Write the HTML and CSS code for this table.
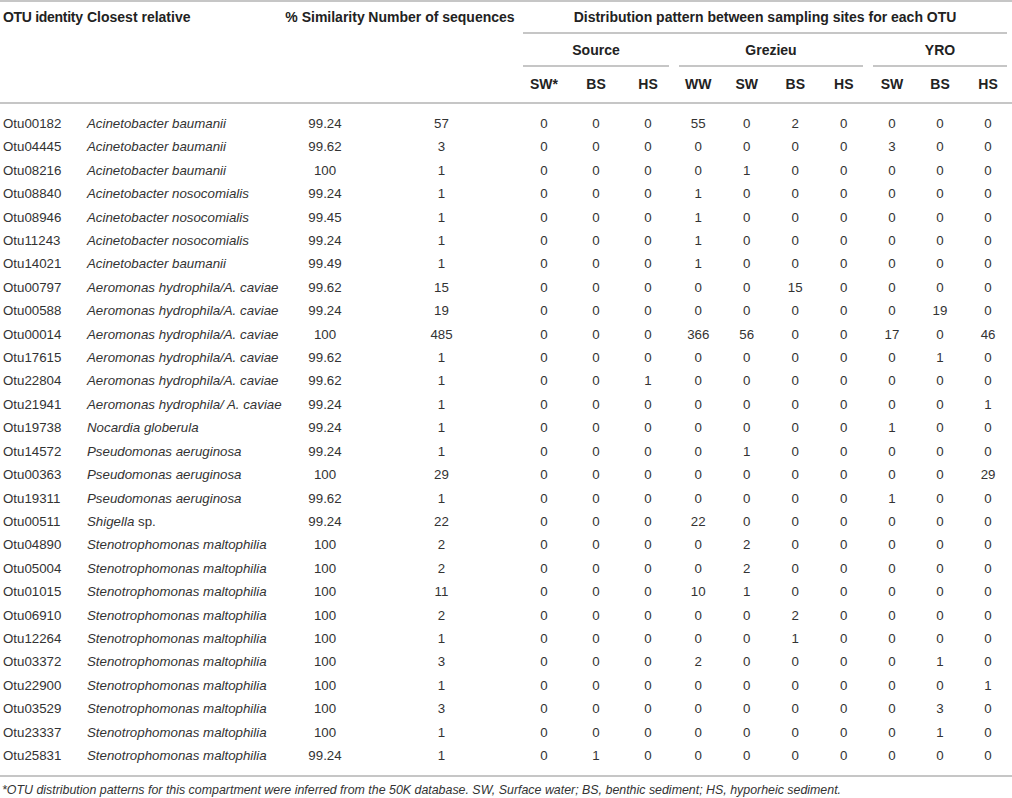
FILE: index.html
```html
<!DOCTYPE html>
<html>
<head>
<meta charset="utf-8">
<link rel="stylesheet" href="styles.css">
</head>
<body>
<div class="wrap">
<table class="otu">
  <colgroup>
    <col class="c-id"><col class="c-rel"><col class="c-sim"><col class="c-num">
    <col class="c-src"><col class="c-src"><col class="c-src">
    <col class="c-grz"><col class="c-grz"><col class="c-grz"><col class="c-grz">
    <col class="c-yro"><col class="c-yro"><col class="c-yro">
  </colgroup>
  <thead>
    <tr>
      <th rowspan="3" class="h-left h-tight">OTU identity</th>
      <th rowspan="3" class="h-left">Closest relative</th>
      <th rowspan="3" class="h-mid">% Similarity</th>
      <th rowspan="3" class="h-mid">Number of sequences</th>
      <th colspan="10" class="h-group h-top"><div class="grp grp1">Distribution pattern between sampling sites for each OTU</div></th>
    </tr>
    <tr>
      <th colspan="3" class="h-group"><div class="grp grp2">Source</div></th>
      <th colspan="4" class="h-group"><div class="grp grp2">Grezieu</div></th>
      <th colspan="3" class="h-group"><div class="grp grp2">YRO</div></th>
    </tr>
    <tr class="h-sub">
      <th>SW*</th><th>BS</th><th>HS</th>
      <th>WW</th><th>SW</th><th>BS</th><th>HS</th>
      <th>SW</th><th>BS</th><th>HS</th>
    </tr>
  </thead>
  <tbody>
    <tr><td>Otu00182</td><td><i>Acinetobacter baumanii</i></td><td>99.24</td><td>57</td><td>0</td><td>0</td><td>0</td><td>55</td><td>0</td><td>2</td><td>0</td><td>0</td><td>0</td><td>0</td></tr>
    <tr><td>Otu04445</td><td><i>Acinetobacter baumanii</i></td><td>99.62</td><td>3</td><td>0</td><td>0</td><td>0</td><td>0</td><td>0</td><td>0</td><td>0</td><td>3</td><td>0</td><td>0</td></tr>
    <tr><td>Otu08216</td><td><i>Acinetobacter baumanii</i></td><td>100</td><td>1</td><td>0</td><td>0</td><td>0</td><td>0</td><td>1</td><td>0</td><td>0</td><td>0</td><td>0</td><td>0</td></tr>
    <tr><td>Otu08840</td><td><i>Acinetobacter nosocomialis</i></td><td>99.24</td><td>1</td><td>0</td><td>0</td><td>0</td><td>1</td><td>0</td><td>0</td><td>0</td><td>0</td><td>0</td><td>0</td></tr>
    <tr><td>Otu08946</td><td><i>Acinetobacter nosocomialis</i></td><td>99.45</td><td>1</td><td>0</td><td>0</td><td>0</td><td>1</td><td>0</td><td>0</td><td>0</td><td>0</td><td>0</td><td>0</td></tr>
    <tr><td>Otu11243</td><td><i>Acinetobacter nosocomialis</i></td><td>99.24</td><td>1</td><td>0</td><td>0</td><td>0</td><td>1</td><td>0</td><td>0</td><td>0</td><td>0</td><td>0</td><td>0</td></tr>
    <tr><td>Otu14021</td><td><i>Acinetobacter baumanii</i></td><td>99.49</td><td>1</td><td>0</td><td>0</td><td>0</td><td>1</td><td>0</td><td>0</td><td>0</td><td>0</td><td>0</td><td>0</td></tr>
    <tr><td>Otu00797</td><td><i>Aeromonas hydrophila/A. caviae</i></td><td>99.62</td><td>15</td><td>0</td><td>0</td><td>0</td><td>0</td><td>0</td><td>15</td><td>0</td><td>0</td><td>0</td><td>0</td></tr>
    <tr><td>Otu00588</td><td><i>Aeromonas hydrophila/A. caviae</i></td><td>99.24</td><td>19</td><td>0</td><td>0</td><td>0</td><td>0</td><td>0</td><td>0</td><td>0</td><td>0</td><td>19</td><td>0</td></tr>
    <tr><td>Otu00014</td><td><i>Aeromonas hydrophila/A. caviae</i></td><td>100</td><td>485</td><td>0</td><td>0</td><td>0</td><td>366</td><td>56</td><td>0</td><td>0</td><td>17</td><td>0</td><td>46</td></tr>
    <tr><td>Otu17615</td><td><i>Aeromonas hydrophila/A. caviae</i></td><td>99.62</td><td>1</td><td>0</td><td>0</td><td>0</td><td>0</td><td>0</td><td>0</td><td>0</td><td>0</td><td>1</td><td>0</td></tr>
    <tr><td>Otu22804</td><td><i>Aeromonas hydrophila/A. caviae</i></td><td>99.62</td><td>1</td><td>0</td><td>0</td><td>1</td><td>0</td><td>0</td><td>0</td><td>0</td><td>0</td><td>0</td><td>0</td></tr>
    <tr><td>Otu21941</td><td><i>Aeromonas hydrophila/ A. caviae</i></td><td>99.24</td><td>1</td><td>0</td><td>0</td><td>0</td><td>0</td><td>0</td><td>0</td><td>0</td><td>0</td><td>0</td><td>1</td></tr>
    <tr><td>Otu19738</td><td><i>Nocardia globerula</i></td><td>99.24</td><td>1</td><td>0</td><td>0</td><td>0</td><td>0</td><td>0</td><td>0</td><td>0</td><td>1</td><td>0</td><td>0</td></tr>
    <tr><td>Otu14572</td><td><i>Pseudomonas aeruginosa</i></td><td>99.24</td><td>1</td><td>0</td><td>0</td><td>0</td><td>0</td><td>1</td><td>0</td><td>0</td><td>0</td><td>0</td><td>0</td></tr>
    <tr><td>Otu00363</td><td><i>Pseudomonas aeruginosa</i></td><td>100</td><td>29</td><td>0</td><td>0</td><td>0</td><td>0</td><td>0</td><td>0</td><td>0</td><td>0</td><td>0</td><td>29</td></tr>
    <tr><td>Otu19311</td><td><i>Pseudomonas aeruginosa</i></td><td>99.62</td><td>1</td><td>0</td><td>0</td><td>0</td><td>0</td><td>0</td><td>0</td><td>0</td><td>1</td><td>0</td><td>0</td></tr>
    <tr><td>Otu00511</td><td><i>Shigella</i> sp.</td><td>99.24</td><td>22</td><td>0</td><td>0</td><td>0</td><td>22</td><td>0</td><td>0</td><td>0</td><td>0</td><td>0</td><td>0</td></tr>
    <tr><td>Otu04890</td><td><i>Stenotrophomonas maltophilia</i></td><td>100</td><td>2</td><td>0</td><td>0</td><td>0</td><td>0</td><td>2</td><td>0</td><td>0</td><td>0</td><td>0</td><td>0</td></tr>
    <tr><td>Otu05004</td><td><i>Stenotrophomonas maltophilia</i></td><td>100</td><td>2</td><td>0</td><td>0</td><td>0</td><td>0</td><td>2</td><td>0</td><td>0</td><td>0</td><td>0</td><td>0</td></tr>
    <tr><td>Otu01015</td><td><i>Stenotrophomonas maltophilia</i></td><td>100</td><td>11</td><td>0</td><td>0</td><td>0</td><td>10</td><td>1</td><td>0</td><td>0</td><td>0</td><td>0</td><td>0</td></tr>
    <tr><td>Otu06910</td><td><i>Stenotrophomonas maltophilia</i></td><td>100</td><td>2</td><td>0</td><td>0</td><td>0</td><td>0</td><td>0</td><td>2</td><td>0</td><td>0</td><td>0</td><td>0</td></tr>
    <tr><td>Otu12264</td><td><i>Stenotrophomonas maltophilia</i></td><td>100</td><td>1</td><td>0</td><td>0</td><td>0</td><td>0</td><td>0</td><td>1</td><td>0</td><td>0</td><td>0</td><td>0</td></tr>
    <tr><td>Otu03372</td><td><i>Stenotrophomonas maltophilia</i></td><td>100</td><td>3</td><td>0</td><td>0</td><td>0</td><td>2</td><td>0</td><td>0</td><td>0</td><td>0</td><td>1</td><td>0</td></tr>
    <tr><td>Otu22900</td><td><i>Stenotrophomonas maltophilia</i></td><td>100</td><td>1</td><td>0</td><td>0</td><td>0</td><td>0</td><td>0</td><td>0</td><td>0</td><td>0</td><td>0</td><td>1</td></tr>
    <tr><td>Otu03529</td><td><i>Stenotrophomonas maltophilia</i></td><td>100</td><td>3</td><td>0</td><td>0</td><td>0</td><td>0</td><td>0</td><td>0</td><td>0</td><td>0</td><td>3</td><td>0</td></tr>
    <tr><td>Otu23337</td><td><i>Stenotrophomonas maltophilia</i></td><td>100</td><td>1</td><td>0</td><td>0</td><td>0</td><td>0</td><td>0</td><td>0</td><td>0</td><td>0</td><td>1</td><td>0</td></tr>
    <tr><td>Otu25831</td><td><i>Stenotrophomonas maltophilia</i></td><td>99.24</td><td>1</td><td>0</td><td>1</td><td>0</td><td>0</td><td>0</td><td>0</td><td>0</td><td>0</td><td>0</td><td>0</td></tr>
  </tbody>
</table>
<p class="note">*OTU distribution patterns for this compartment were inferred from the 50K database. SW, Surface water; BS, benthic sediment; HS, hyporheic sediment.</p>
</div>
</body>
</html>
```

FILE: styles.css
```css
html, body {
  margin: 0;
  padding: 0;
  background: #ffffff;
}

body {
  font-family: "Liberation Sans", Arial, Helvetica, sans-serif;
  color: #333333;
}

.wrap {
  width: 1012px;
}

.otu {
  width: 1012px;
  table-layout: fixed;
  border-collapse: separate;
  border-spacing: 0;
}

.c-id { width: 84px; }
.c-rel { width: 201px; }
.c-sim { width: 80px; }
.c-num { width: 153px; }
.c-src { width: 52px; }
.c-grz { width: 48.5px; }
.c-yro { width: 48px; }

.otu th {
  font-size: 14px;
  font-weight: bold;
  color: #222222;
  padding: 0;
  white-space: nowrap;
}

.otu .h-left,
.otu .h-mid {
  vertical-align: top;
  line-height: 30px;
  border-top: 2px solid #c6c6c6;
  border-bottom: 2px solid #c6c6c6;
}

.otu .h-left {
  text-align: left;
  padding-left: 3px;
}

.otu .h-tight {
  letter-spacing: -0.3px;
}

.otu .h-mid {
  text-align: center;
}

.otu .h-group {
  padding: 0 5px;
  text-align: center;
}

.otu .h-top {
  border-top: 2px solid #c6c6c6;
}

.grp {
  border-bottom: 2px solid #c6c6c6;
}

.grp1 {
  line-height: 30px;
}

.grp2 {
  padding-top: 2px;
  line-height: 29px;
}

.otu .h-sub th {
  text-align: center;
  line-height: 35px;
  border-bottom: 2px solid #c6c6c6;
}

.otu td {
  font-size: 13.3px;
  line-height: 23.4px;
  padding: 0;
  text-align: center;
  white-space: nowrap;
}

.otu td:nth-child(1),
.otu td:nth-child(2) {
  text-align: left;
  padding-left: 3px;
}

.otu tbody tr:first-child td {
  padding-top: 8px;
}

.otu tbody tr:last-child td {
  padding-bottom: 8px;
  border-bottom: 2px solid #c6c6c6;
}

.note {
  margin: 0;
  padding: 6px 0 0 2px;
  font-size: 12.4px;
  line-height: 15px;
  font-style: italic;
  color: #333333;
}
```
